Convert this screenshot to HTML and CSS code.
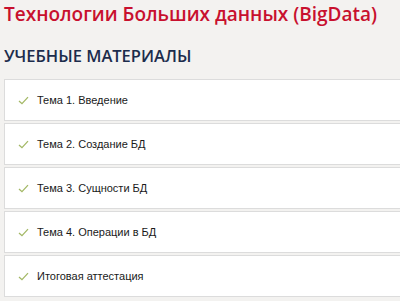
FILE: index.html
```html
<!DOCTYPE html>
<html lang="ru">
<head>
<meta charset="utf-8">
<link rel="stylesheet" href="styles.css">
</head>
<body>
<h1 class="title">Технологии Больших данных (BigData)</h1>
<h2 class="section">УЧЕБНЫЕ МАТЕРИАЛЫ</h2>
<ul class="list">
  <li class="item"><svg class="check" viewBox="0 0 12 10" width="11" height="9"><path d="M1 5.5 L4.3 8.5 L11 1.2" fill="none" stroke="#a3b865" stroke-width="1.4"/></svg><span>Тема 1. Введение</span></li>
  <li class="item"><svg class="check" viewBox="0 0 12 10" width="11" height="9"><path d="M1 5.5 L4.3 8.5 L11 1.2" fill="none" stroke="#a3b865" stroke-width="1.4"/></svg><span>Тема 2. Создание БД</span></li>
  <li class="item"><svg class="check" viewBox="0 0 12 10" width="11" height="9"><path d="M1 5.5 L4.3 8.5 L11 1.2" fill="none" stroke="#a3b865" stroke-width="1.4"/></svg><span>Тема 3. Сущности БД</span></li>
  <li class="item"><svg class="check" viewBox="0 0 12 10" width="11" height="9"><path d="M1 5.5 L4.3 8.5 L11 1.2" fill="none" stroke="#a3b865" stroke-width="1.4"/></svg><span>Тема 4. Операции в БД</span></li>
  <li class="item"><svg class="check" viewBox="0 0 12 10" width="11" height="9"><path d="M1 5.5 L4.3 8.5 L11 1.2" fill="none" stroke="#a3b865" stroke-width="1.4"/></svg><span>Итоговая аттестация</span></li>
</ul>
</body>
</html>
```
FILE: styles.css
```css
html, body { margin: 0; padding: 0; }
html { overflow: hidden; height: 301px; }
body {
  background: #f3f2f0;
  font-family: "Open Sans", "Noto Sans", sans-serif;
  height: 301px;
  overflow: hidden;
}
.title {
  margin: 0;
  padding: 0 0 0 4px;
  font-size: 19px;
  font-weight: 600;
  color: #c8102e;
  line-height: 28px;
}
.section {
  margin: 0;
  padding: 15px 0 0 4px;
  font-size: 16.5px;
  font-weight: 600;
  color: #1c2c4c;
  line-height: 26px;
}
.list {
  list-style: none;
  margin: 10px 0 0 4px;
  padding: 0;
  display: flex;
  flex-direction: column;
  gap: 2px;
}
.item {
  display: flex;
  align-items: center;
  height: 40px;
  background: #fff;
  border: 1px solid #dcdcdc;
  border-right: none;
  font-family: "Liberation Sans", Arial, sans-serif;
  font-size: 11px;
  color: #1a1a1a;
}
.check { margin: 0 8px 0 13px; flex: none; }
```
